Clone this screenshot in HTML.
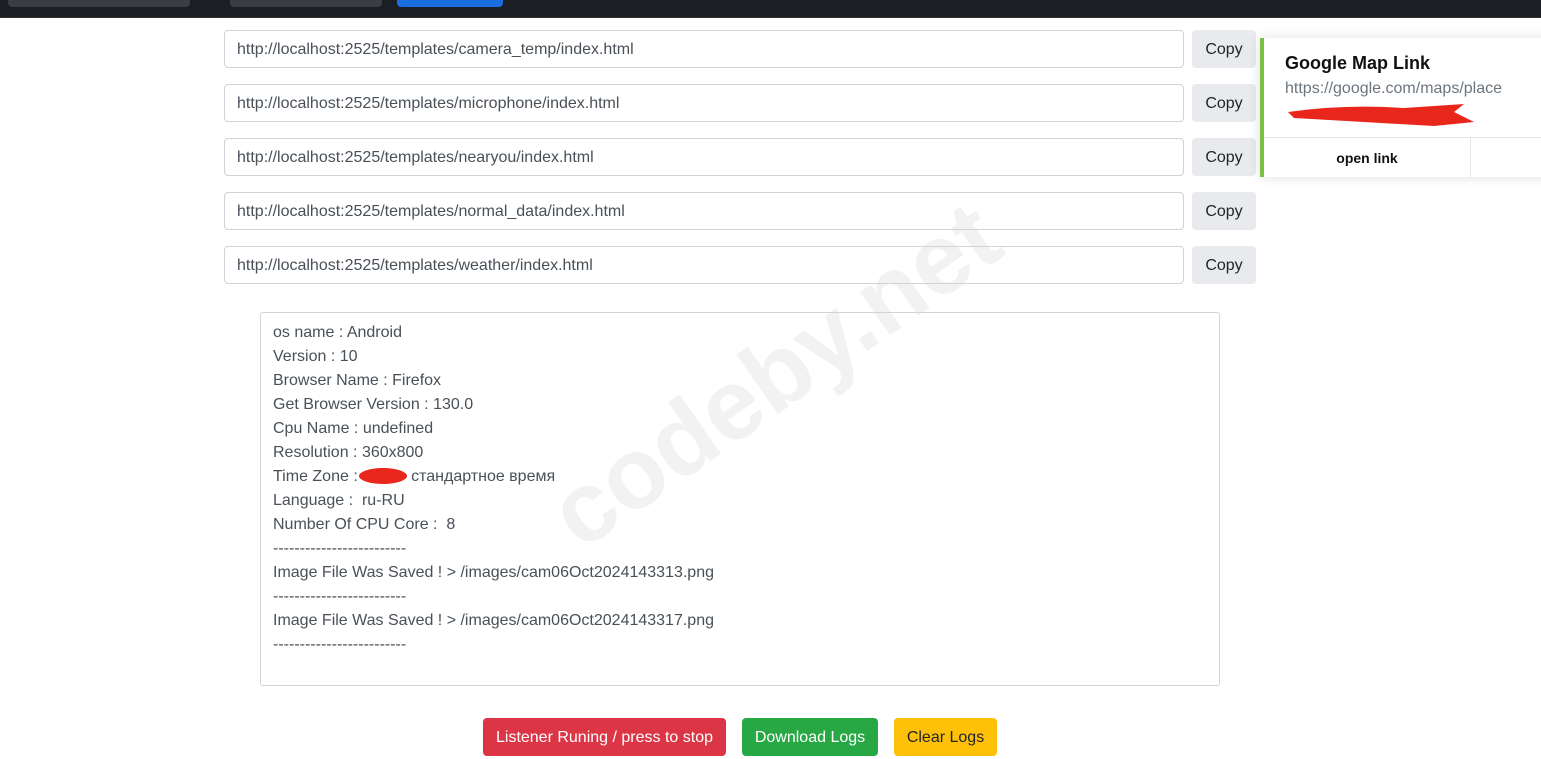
<!DOCTYPE html>
<html><head><meta charset="utf-8"><style>
body{margin:0;width:1541px;height:759px;overflow:hidden;background:#fff;font-family:"Liberation Sans","Noto Sans CJK SC",sans-serif;color:#212529;position:relative}
.top{position:absolute;left:0;top:0;width:1541px;height:17px;background:#1b1e24;border-bottom:1px solid #333}
.tb{position:absolute;top:-6px;height:13px;border-radius:4px;background:#3a3d43}
.row{position:absolute;left:224px;height:38px}
.inp{position:absolute;left:0;top:0;width:946px;height:36px;border:1px solid #ced4da;border-radius:4px;font-size:16px;line-height:38px;padding-left:12px;color:#495057}
.cp{position:absolute;left:968px;top:0;width:64px;height:38px;background:#e9eaee;border-radius:4px;font-size:16px;line-height:39px;text-align:center;color:#212529}
.ta{position:absolute;left:260px;top:312px;width:958px;height:372px;border:1px solid #ced4da;border-radius:3px;overflow:hidden}
.ta div{position:absolute;left:12px;font-size:16px;color:#495057;line-height:24px;white-space:pre}
.wm{position:absolute;font-size:100px;font-weight:bold;color:#f2f2f2;white-space:nowrap;transform:translate(-50%,-50%) rotate(-35deg)}
.btn{position:absolute;top:718px;height:38px;border-radius:4px;font-size:16px;line-height:39px;text-align:center}
.card{position:absolute;left:1260px;top:38px;width:290px;height:139px;background:#fff;box-shadow:0 0 12px rgba(0,0,0,.12);border-left:4px solid #7ac143}
</style></head><body>
<div class="top">
<div class="tb" style="left:8px;width:182px"></div>
<div class="tb" style="left:230px;width:152px"></div>
<div class="tb" style="left:397px;width:106px;background:#1a6ee0;border-radius:0 0 4px 4px"></div>
</div>
<div class="wm" style="left:775px;top:375px">codeby.net</div>
<div class="row" style="top:30px"><div class="inp">http://localhost:2525/templates/camera_temp/index.html</div><div class="cp">Copy</div></div>
<div class="row" style="top:84px"><div class="inp">http://localhost:2525/templates/microphone/index.html</div><div class="cp">Copy</div></div>
<div class="row" style="top:138px"><div class="inp">http://localhost:2525/templates/nearyou/index.html</div><div class="cp">Copy</div></div>
<div class="row" style="top:192px"><div class="inp">http://localhost:2525/templates/normal_data/index.html</div><div class="cp">Copy</div></div>
<div class="row" style="top:246px"><div class="inp">http://localhost:2525/templates/weather/index.html</div><div class="cp">Copy</div></div>
<div class="ta">
<div style="top:8px">os name : Android
Version : 10
Browser Name : Firefox
Get Browser Version : 130.0
Cpu Name : undefined
Resolution : 360x800
Time Zone :            стандартное время
Language :  ru-RU
Number Of CPU Core :  8
-------------------------
Image File Was Saved ! &gt; /images/cam06Oct2024143313.png
-------------------------
Image File Was Saved ! &gt; /images/cam06Oct2024143317.png
-------------------------</div>
<svg style="position:absolute;left:96px;top:151px" width="52" height="22"><ellipse cx="26" cy="12" rx="24" ry="8" fill="#e8261c"/></svg>
</div>
<div class="card">
<div style="position:absolute;left:21px;top:15px;font-size:18px;font-weight:bold;color:#111">Google Map Link</div>
<div style="position:absolute;left:21px;top:42px;font-size:16px;color:#6c757d">https://google.com/maps/place</div>
<svg style="position:absolute;left:20px;top:62px" width="200" height="34"><path d="M4 12 Q60 4 120 8 L180 4 L170 12 L190 22 L150 26 Q80 22 10 18 Z" fill="#e8261c"/></svg>
<div style="position:absolute;left:0;top:99px;width:290px;border-top:1px solid #e5e5e5"></div>
<div style="position:absolute;left:206px;top:99px;height:40px;border-left:1px solid #e5e5e5"></div>
<div style="position:absolute;left:0;top:112px;width:206px;text-align:center;font-size:14px;font-weight:bold;color:#111">open link</div>
</div>
<div class="btn" style="left:483px;width:243px;background:#dc3545;color:#fff">Listener Runing / press to stop</div>
<div class="btn" style="left:742px;width:136px;background:#28a745;color:#fff">Download Logs</div>
<div class="btn" style="left:894px;width:103px;background:#ffc107;color:#212529">Clear Logs</div>
</body></html>
